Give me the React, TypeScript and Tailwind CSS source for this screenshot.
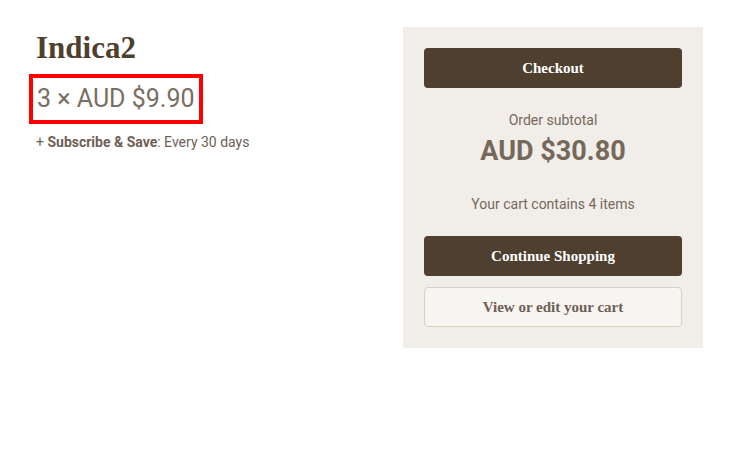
import React from "react";

const serif = { fontFamily: '"Liberation Serif", "DejaVu Serif", serif' };

const App: React.FC = () => {
  return (
    <div className="flex gap-[36px] pl-[36px] pt-[27px] bg-white min-h-[457px]" style={{ fontFamily: "Roboto, sans-serif" }}>
      {/* item summary */}
      <div className="flex flex-col w-[331px] shrink-0">
        <h1 className="text-[31px] leading-[40px] font-bold text-[#4f3f2e] mt-[1px]" style={serif}>
          Indica2
        </h1>
        <div className="mt-[6px] -ml-[7px] self-start border-[4px] border-[#ff0000] px-[4px] h-[50px] flex items-center">
          <span className="text-[25px] text-[#7a6e62]">3 × AUD $9.90</span>
        </div>
        <p className="mt-[8px] text-[14px] text-[#6e6054]">
          + <span className="font-bold">Subscribe &amp; Save</span>: Every 30 days
        </p>
      </div>

      {/* cart panel */}
      <div className="w-[300px] h-[321px] shrink-0 bg-[#f1eee9] px-[21px] pt-[21px] flex flex-col">
        <button className="h-[40px] rounded-[4px] bg-[#4f3f2e] text-white text-[15px] font-bold" style={serif}>
          Checkout
        </button>
        <p className="mt-[22px] text-center text-[14px] text-[#75695c]">Order subtotal</p>
        <p className="mt-[3px] text-center text-[27px] leading-[34px] font-bold text-[#75695c]">AUD $30.80</p>
        <p className="mt-[26px] text-center text-[14px] text-[#75695c]">Your cart contains 4 items</p>
        <button className="mt-[21px] h-[40px] rounded-[4px] bg-[#4f3f2e] text-white text-[15px] font-bold" style={serif}>
          Continue Shopping
        </button>
        <button className="mt-[11px] h-[40px] rounded-[4px] border border-[#d9cfc3] bg-[#f7f5f2] text-[#6e6054] text-[15px] font-bold" style={serif}>
          View or edit your cart
        </button>
      </div>
    </div>
  );
};

export default App;
